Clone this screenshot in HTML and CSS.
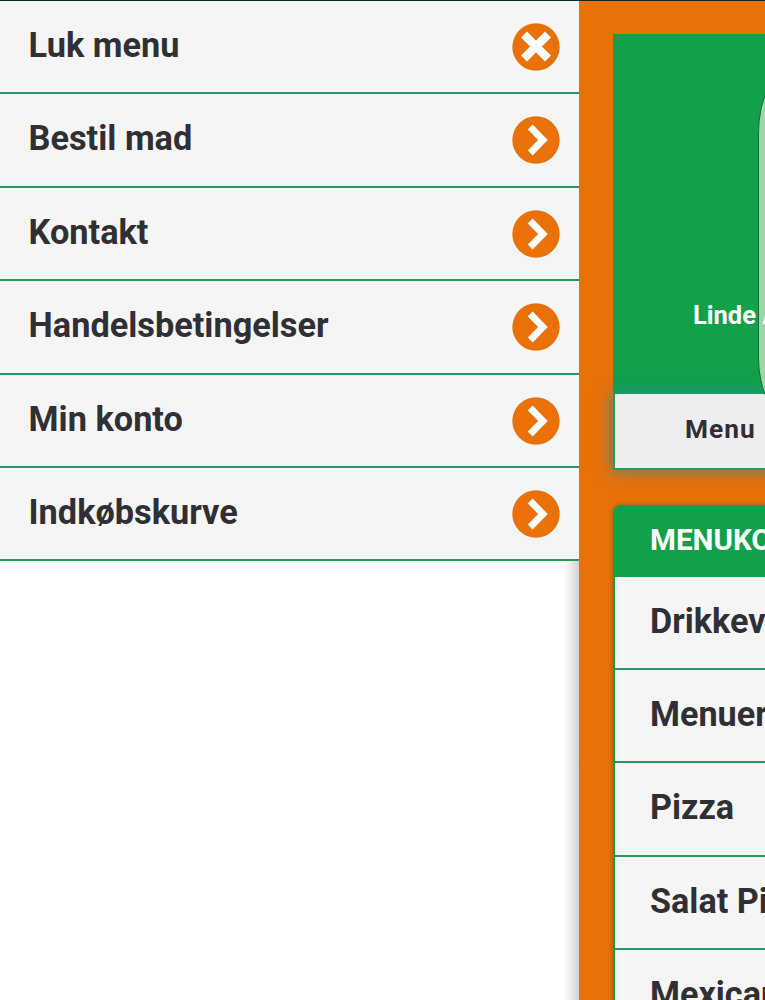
FILE: index.html
```html
<!DOCTYPE html>
<html lang="da">
<head>
    <meta charset="UTF-8">
    <meta name="viewport" content="width=device-width, initial-scale=1.0">
    <title>Bestil mad</title>
    <link rel="stylesheet" href="styles.css">
</head>
<body>

    <!-- Icons -->
    <svg class="icon-defs" width="0" height="0">
        <symbol id="icon-close" viewBox="0 0 48 48">
            <circle cx="24" cy="24" r="23.7" fill="#e97108"/>
            <path d="M12 11.5L36 35.5M36 11.5L12 35.5" fill="none" stroke="#fff" stroke-width="8.4"/>
        </symbol>
        <symbol id="icon-next" viewBox="0 0 48 48">
            <circle cx="24" cy="24" r="23.7" fill="#e97108"/>
            <path d="M18.2 11L31 24L18.2 37" fill="none" stroke="#fff" stroke-width="6.8"/>
        </symbol>
    </svg>

    <div class="page">
        <!-- Slide-in menu -->
        <nav class="side-menu">
            <ul class="side-list">
                <li><a href="#">Luk menu</a><svg class="icon"><use href="#icon-close"/></svg></li>
                <li class="tall"><a href="#">Bestil mad</a><svg class="icon"><use href="#icon-next"/></svg></li>
                <li><a href="#">Kontakt</a><svg class="icon"><use href="#icon-next"/></svg></li>
                <li class="tall"><a href="#">Handelsbetingelser</a><svg class="icon"><use href="#icon-next"/></svg></li>
                <li><a href="#">Min konto</a><svg class="icon"><use href="#icon-next"/></svg></li>
                <li><a href="#">Indkøbskurve</a><svg class="icon"><use href="#icon-next"/></svg></li>
            </ul>
            <div class="side-rest"></div>
        </nav>

        <!-- Shop page, pushed to the right -->
        <main class="content">
            <header class="header">
                <p class="address">Linde Allé</p>
                <div class="tabs"><a href="#">Menu</a></div>
                <div class="logo"></div>
            </header>

            <section class="menu-card">
                <h2>MENUKORT</h2>
                <ul>
                    <li>Drikkevarer</li>
                    <li>Menuer</li>
                    <li class="tall">Pizza</li>
                    <li>Salat Pizza</li>
                    <li>Mexicansk</li>
                </ul>
            </section>
        </main>
    </div>

</body>
</html>
```
FILE: styles.css
```css
* {
    box-sizing: border-box;
}

body {
    margin: 0;
    font-family: Roboto, "Liberation Sans", sans-serif;
    font-weight: 700;
    color: #302f33;
    background-color: #fff;
    overflow: hidden;
}

ul {
    list-style: none;
    margin: 0;
    padding: 0;
}

a {
    color: inherit;
    text-decoration: none;
}

.icon-defs {
    position: absolute;
}

.page {
    display: flex;
    height: 1000px;
    border-top: 1px solid #0d2422;
    overflow: hidden;
}

/* side menu */
.side-menu {
    display: flex;
    flex-direction: column;
    flex: 0 0 579px;
}

.side-list li {
    display: flex;
    align-items: center;
    justify-content: space-between;
    height: 93px;
    padding: 0 19px 0 28.6px;
    background-color: #f5f5f6;
    border-bottom: 2px solid #2f9560;
    font-size: 34.3px;
}

.side-list li.tall {
    height: 94px;
}

.side-list a {
    padding-bottom: 4px;
}

.icon {
    width: 48px;
    height: 48px;
}

.side-rest {
    flex: 1;
    background: linear-gradient(to left, #d2d0cf, #e9e8e8 7px, #fff 16px);
}

/* shop page */
.content {
    flex: 1;
    min-width: 0;
    padding: 33px 0 0 34px;
    background-color: #e97108;
    overflow: hidden;
}

.header {
    position: relative;
    width: 720px;
    height: 436px;
    padding-top: 266px;
    background-color: #13a04a;
}

.logo {
    position: absolute;
    top: 39px;
    left: 145px;
    width: 430px;
    height: 344px;
    border: 1px solid #14683a;
    border-radius: 30px / 60px;
    background-color: #9bd8a8;
}

.address {
    position: relative;
    z-index: 1;
    margin: 0;
    padding-left: 80px;
    font-size: 25.5px;
    line-height: 30px;
    color: #fff;
}

.tabs {
    height: 76px;
    margin-top: 64px;
    padding-left: 70px;
    border: 2px solid #2c9a5c;
    border-top: 0;
    background-color: #eeedf0;
    box-shadow: 0 0 14px 2px rgba(40, 140, 160, 0.7);
    font-size: 26.3px;
    line-height: 70px;
    letter-spacing: 1px;
}

.menu-card {
    width: 720px;
    margin-top: 35px;
    border-radius: 8px;
    background-color: #13a04a;
    box-shadow: 0 0 4px rgba(60, 90, 30, 0.6);
    overflow: hidden;
}

.menu-card h2 {
    height: 72px;
    margin: 0;
    padding-left: 37px;
    font-size: 29.6px;
    line-height: 70px;
    color: #fff;
}

.menu-card li {
    height: 93px;
    margin-left: 2px;
    padding-left: 35px;
    background-color: #f5f5f6;
    border-bottom: 2px solid #2f9560;
    font-size: 34.2px;
    line-height: 89px;
}

.menu-card li.tall {
    height: 94px;
}
```
